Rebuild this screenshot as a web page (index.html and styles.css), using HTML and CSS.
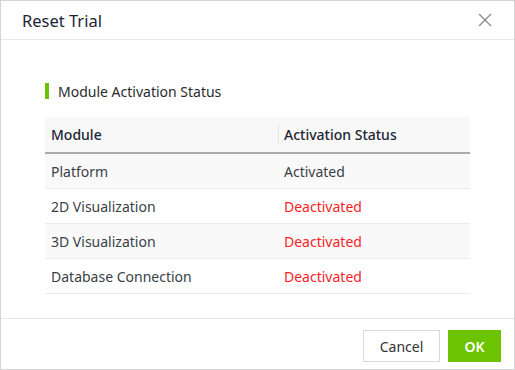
FILE: index.html
```html
<!DOCTYPE html>
<html>
<head>
<meta charset="utf-8">
<link rel="stylesheet" href="styles.css">
</head>
<body>
<div class="dialog">
  <div class="header">
    <span class="title">Reset Trial</span>
    <svg class="close" width="14" height="14" viewBox="0 0 14 14"><path d="M1 1L13 13M13 1L1 13" stroke="#8a8a8a" stroke-width="1.3" fill="none"/></svg>
  </div>
  <div class="content">
    <div class="section-title"><span class="bar"></span>Module Activation Status</div>
    <table class="grid">
      <thead>
        <tr><th class="c1">Module</th><th class="c2"><span class="sep"></span>Activation Status</th></tr>
      </thead>
      <tbody>
        <tr class="odd"><td>Platform</td><td>Activated</td></tr>
        <tr><td>2D Visualization</td><td class="off">Deactivated</td></tr>
        <tr class="odd"><td>3D Visualization</td><td class="off">Deactivated</td></tr>
        <tr><td>Database Connection</td><td class="off">Deactivated</td></tr>
      </tbody>
    </table>
  </div>
  <div class="footer">
    <button class="btn cancel">Cancel</button>
    <button class="btn ok">OK</button>
  </div>
</div>
</body>
</html>
```
FILE: styles.css
```css
html, body { margin: 0; padding: 0; background: #fff; }
body { font-family: "Source Sans Pro", "Noto Sans", sans-serif; color: #333; }
.dialog {
  width: 515px; height: 370px; box-sizing: border-box;
  border: 1px solid #d4d4d4; display: flex; flex-direction: column; background: #fff;
}
.header {
  height: 38px; border-bottom: 1px solid #e8e8e8; display: flex; align-items: center;
  justify-content: space-between; padding: 0 22px 0 21px;
}
.title { font-size: 16.5px; color: #1d2635; }
.close { display: block; }
.content { flex: 1; padding: 0 44px; }
.section-title {
  display: flex; align-items: center; margin-top: 42px; height: 18px;
  font-size: 14px; color: #2b2b2b;
}
.bar { width: 4px; height: 16px; background: #6cc400; margin-right: 9px; }
.grid { width: 100%; border-collapse: collapse; margin-top: 17px; font-size: 14px; }
.grid th {
  height: 35px; background: #f8f8f8; text-align: left; font-weight: 500; color: #1d2635;
  border-bottom: 2px solid #aaaaaa; padding: 0 6px; position: relative;
}
.grid th.c1 { width: 221px; }
.sep { position: absolute; left: 0; top: 6px; bottom: 7px; width: 1px; background: #e6e6e6; }
.grid td { height: 34px; border-bottom: 1px solid #ebebeb; padding: 0 6px; color: #3a3f48; }
.grid tr.odd td { background: #f9f9f9; }
.grid td.off { color: #f71e28; }
.footer {
  border-top: 1px solid #e8e8e8; display: flex; justify-content: flex-end; gap: 8px;
  padding: 11px 13px 7px;
}
.btn { height: 32px; font-family: inherit; font-size: 14px; border-radius: 0; cursor: pointer; }
.cancel { width: 77px; background: #fff; border: 1px solid #d9d9d9; color: #333; }
.ok { width: 53px; background: #6cc400; border: none; color: #fff; font-weight: 600; }
```
